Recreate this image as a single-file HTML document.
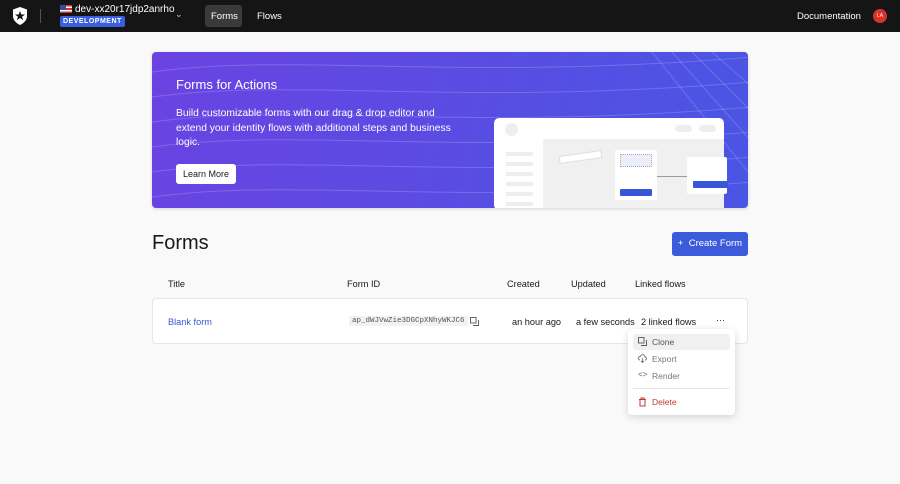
<!DOCTYPE html>
<html><head><meta charset="utf-8"><style>
*{box-sizing:border-box;margin:0;padding:0}
body{width:900px;height:484px;background:#f9f9f9;font-family:"Liberation Sans",sans-serif;color:#191919;position:relative;overflow:hidden;font-size:9px}
.abs{position:absolute}
.hdr{left:0;top:0;width:900px;height:32px;background:#151515}
.t{position:absolute;white-space:nowrap}
</style></head><body>
<div class="abs hdr"></div>
<svg class="abs" style="left:12px;top:7px" width="16" height="18" viewBox="0 0 16 18"><path d="M8 0L15 2.5V9C15 13 12 16 8 18C4 16 1 13 1 9V2.5Z" fill="#fff"/><path d="M8 4L9.3 7.5H13L10 9.7L11.2 13.3L8 11L4.8 13.3L6 9.7L3 7.5H6.7Z" fill="#151515"/></svg>
<div class="abs" style="left:40px;top:9px;width:1px;height:14px;background:#555"></div>
<div class="abs" style="left:60px;top:5px;width:12px;height:8px;background:linear-gradient(#c33 0 20%,#fff 20% 40%,#c33 40% 60%,#fff 60% 80%,#c33 80%)"><div style="width:6px;height:5px;background:#3a4a9a"></div></div>
<div class="t" style="left:75px;top:4px;color:#fff;font-size:10px">dev-xx20r17jdp2anrho</div>
<div class="t" style="left:60px;top:16px;background:#3a5ee0;color:#fff;font-size:7px;font-weight:bold;letter-spacing:.5px;padding:1px 3px;border-radius:2px;height:11px;line-height:9px">DEVELOPMENT</div>
<div class="t" style="left:175px;top:9px;color:#ccc;font-size:9px">⌄</div>
<div class="abs" style="left:205px;top:5px;width:37px;height:22px;background:#3a3a3a;border-radius:3px"></div>
<div class="t" style="left:211px;top:11px;color:#fff;font-size:9.5px">Forms</div>
<div class="t" style="left:257px;top:11px;color:#fff;font-size:9.5px">Flows</div>
<div class="t" style="left:797px;top:11px;color:#fff;font-size:9.5px">Documentation</div>
<div class="abs" style="left:873px;top:9px;width:14px;height:14px;border-radius:50%;background:#d8322f;color:#fff;font-size:5px;text-align:center;line-height:14px">LA</div>

<div class="abs" style="left:152px;top:52px;width:596px;height:156px;border-radius:4px;background:linear-gradient(100deg,#6a43e2,#4a55e4);overflow:hidden;box-shadow:0 1px 3px rgba(0,0,0,.15)">
<svg width="596" height="156" style="position:absolute;left:0;top:0" fill="none" stroke="rgba(255,255,255,.18)" stroke-width="1">
<path d="M0 20C150 0 300 30 600 5"/><path d="M0 45C150 25 300 55 600 30"/><path d="M0 70C150 50 300 80 600 55"/><path d="M0 95C150 75 300 105 600 80"/><path d="M0 120C150 100 300 130 600 105"/><path d="M0 145C150 125 300 155 600 130"/>
<path d="M520 0L600 90"/><path d="M540 0L600 60"/><path d="M500 0L596 120"/><path d="M560 0L600 35"/>
</svg>
<div class="t" style="left:24px;top:25px;color:#fff;font-size:13px">Forms for Actions</div>
<div class="t" style="left:24px;top:55px;color:#fff;font-size:10.3px;line-height:14.5px;white-space:normal;width:285px">Build customizable forms with our drag &amp; drop editor and extend your identity flows with additional steps and business logic.</div>
<div class="abs" style="left:24px;top:112px;width:60px;height:20px;background:#fff;border-radius:3px;font-size:9px;text-align:center;line-height:20px">Learn More</div>
<div class="abs" style="left:342px;top:66px;width:230px;height:92px;background:#fff;border-radius:5px"></div>
<div class="abs" style="left:391px;top:87px;width:181px;height:69px;background:#f0f0f0"></div>
<div class="abs" style="left:353px;top:71px;width:13px;height:13px;border-radius:50%;background:#eee"></div>
<div class="abs" style="left:523px;top:73px;width:17px;height:7px;border-radius:4px;background:#eee"></div>
<div class="abs" style="left:547px;top:73px;width:17px;height:7px;border-radius:4px;background:#eee"></div>
<div class="abs" style="left:354px;top:100px;width:27px;height:60px;background:repeating-linear-gradient(#eee 0 4px,transparent 4px 10px)"></div>
<div class="abs" style="left:407px;top:101px;width:43px;height:8px;border:1px solid #ddd;background:#fff;transform:rotate(-8deg)"></div>
<div class="abs" style="left:463px;top:98px;width:42px;height:50px;background:#fff;border-radius:2px"></div>
<div class="abs" style="left:468px;top:102px;width:32px;height:13px;background:#eceefc;border:1px dotted #aab"></div>
<div class="abs" style="left:468px;top:137px;width:32px;height:7px;background:#3a56d8;border-radius:1px"></div>
<div class="abs" style="left:505px;top:124px;width:30px;height:1px;background:#999"></div>
<div class="abs" style="left:535px;top:105px;width:40px;height:37px;background:#fff;border-radius:2px"></div>
<div class="abs" style="left:541px;top:129px;width:35px;height:7px;background:#3a56d8;border-radius:1px"></div>
</div>

<div class="t" style="left:152px;top:232px;font-size:20px">Forms</div>
<div class="abs" style="left:672px;top:232px;width:76px;height:24px;background:#3b5bdb;border-radius:3px;color:#fff;font-size:9.5px;line-height:24px;text-align:center">+&nbsp; Create Form</div>

<div class="t" style="left:168px;top:279px;font-size:9.2px">Title</div>
<div class="t" style="left:347px;top:279px;font-size:9.2px">Form ID</div>
<div class="t" style="left:507px;top:279px;font-size:9.2px">Created</div>
<div class="t" style="left:571px;top:279px;font-size:9.2px">Updated</div>
<div class="t" style="left:635px;top:279px;font-size:9.2px">Linked flows</div>

<div class="abs" style="left:152px;top:298px;width:596px;height:46px;background:#fff;border:1px solid #e6e6e6;border-radius:4px"></div>
<div class="t" style="left:168px;top:317px;font-size:9.2px;color:#3a56d8">Blank form</div>
<div class="t" style="left:349px;top:316px;font-size:7.5px;font-family:'Liberation Mono',monospace;background:#f2f2f2;padding:1px 3px;color:#555">ap_dWJVwZie3DGCpXNhyWKJC6</div>
<svg class="abs" style="left:470px;top:317px" width="9" height="9" viewBox="0 0 9 9" fill="none" stroke="#555" stroke-width=".9"><rect x="0.5" y="0.5" width="5.5" height="5.5"/><path d="M3 8.5H8.5V3"/></svg>
<div class="t" style="left:512px;top:317px;font-size:9.2px">an hour ago</div>
<div class="t" style="left:576px;top:317px;font-size:9.2px">a few seconds</div>
<div class="t" style="left:641px;top:317px;font-size:9.2px">2 linked flows</div>
<div class="t" style="left:716px;top:315px;font-size:9px">···</div>

<div class="abs" style="left:628px;top:329px;width:107px;height:86px;background:#fff;border-radius:4px;box-shadow:0 2px 8px rgba(0,0,0,.15)"></div>
<div class="abs" style="left:633px;top:334px;width:97px;height:16px;background:#f0f0f0;border-radius:3px"></div>
<svg class="abs" style="left:638px;top:337px" width="9" height="9" viewBox="0 0 9 9" fill="none" stroke="#555" stroke-width=".9"><rect x="0.5" y="0.5" width="5.5" height="5.5"/><path d="M3 8.5H8.5V3"/></svg>
<div class="t" style="left:652px;top:337px;font-size:8.5px;color:#555">Clone</div>
<svg class="abs" style="left:638px;top:354px" width="9" height="9" viewBox="0 0 9 9" fill="none" stroke="#777" stroke-width=".9"><path d="M2 6C0 6 0 2.5 2.5 2.5C3 0 7 0 7 3C9 3 9 6 7 6M4.5 4V8.5M3 7L4.5 8.5L6 7"/></svg>
<div class="t" style="left:652px;top:354px;font-size:8.5px;color:#777">Export</div>
<div class="t" style="left:638px;top:370px;font-size:8px;color:#666">&lt;&gt;</div>
<div class="t" style="left:652px;top:371px;font-size:8.5px;color:#777">Render</div>
<div class="abs" style="left:633px;top:388px;width:97px;height:1px;background:#e6e6e6"></div>
<svg class="abs" style="left:638px;top:397px" width="9" height="10" viewBox="0 0 9 10" fill="none" stroke="#c0392b" stroke-width="1"><path d="M1 2.5H8M3 2.5V1H6V2.5M2 2.5V9H7V2.5"/></svg>
<div class="t" style="left:652px;top:397px;font-size:8.5px;color:#c0392b">Delete</div>
</body></html>
